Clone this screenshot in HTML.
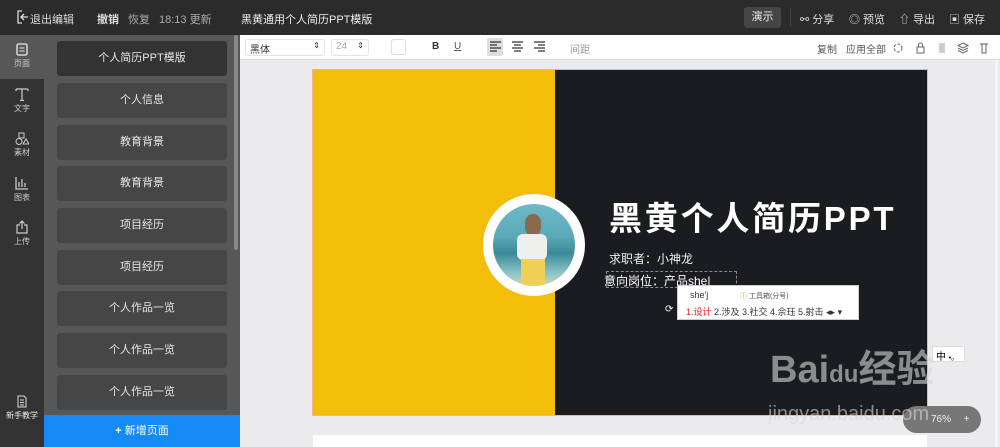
<!DOCTYPE html>
<html><head><meta charset="utf-8"><style>
*{margin:0;padding:0;box-sizing:border-box}
body{width:1000px;height:447px;overflow:hidden;background:#ebebed;font-family:"Liberation Sans","Noto Sans CJK SC",sans-serif;position:relative}
.a{position:absolute}
.top{left:0;top:0;width:1000px;height:35px;background:#2b2b2b;color:#ddd;font-size:11px}
.top span{position:absolute;top:11px}
.rail{left:0;top:35px;width:44px;height:412px;background:#333}
.ri{position:absolute;left:0;width:44px;text-align:center;color:#ccc;font-size:8px}
.ri svg{display:block;margin:0 auto 2px}
.side{left:44px;top:35px;width:196px;height:380px;background:#575757}
.card{position:absolute;left:13px;width:170px;height:35px;background:#464646;border-radius:3px;color:#e6e6e6;font-size:11px;text-align:center;line-height:35px}
.tb{left:240px;top:35px;width:760px;height:25px;background:#fff;border-bottom:1px solid #ddd;font-size:10px;color:#555}
.tb .a{top:6px}
</style></head><body>
<div class="a top">
<svg class="a" style="left:17px;top:10px" width="12" height="14" viewBox="0 0 12 14"><path d="M5 1H1v12h4M4 7h7M7 4l-3 3 3 3" stroke="#ddd" fill="none" stroke-width="1.3"/></svg>
<span style="left:30px">退出编辑</span>
<span style="left:97px;font-weight:bold">撤销</span>
<span style="left:128px;color:#aaa">恢复</span>
<span style="left:159px;color:#aaa">18:13 更新</span>
<span style="left:241px;color:#eee">黑黄通用个人简历PPT模版</span>
<div class="a" style="left:744px;top:7px;width:37px;height:21px;background:#454545;border-radius:3px;color:#eee;text-align:center;line-height:21px">演示</div>
<div class="a" style="left:790px;top:8px;width:1px;height:18px;background:#444"></div>
<span style="left:800px">⚯ 分享</span>
<span style="left:849px">◎ 预览</span>
<span style="left:899px">⇧ 导出</span>
<span style="left:949px">▣ 保存</span>
</div>
<div class="a rail">
<div class="a" style="left:0;top:0;width:44px;height:44px;background:#575757"></div>
<div class="ri" style="top:8px"><svg width="12" height="13"><rect x="1" y="1" width="10" height="11" rx="1.5" stroke="#eee" fill="none" stroke-width="1.3"/><path d="M3.5 5h5M3.5 8h5" stroke="#eee"/></svg>页面</div>
<div class="ri" style="top:52px"><svg width="14" height="14"><path d="M1 2h12M7 2v12M1 2v2M13 2v2M5 13.5h4" stroke="#ccc" fill="none" stroke-width="1.2"/></svg>文字</div>
<div class="ri" style="top:97px"><svg width="14" height="13"><rect x="4" y="1" width="5" height="5" stroke="#ccc" fill="none"/><circle cx="4" cy="9.5" r="3" stroke="#ccc" fill="none"/><path d="M8 12l3-5 3 5z" stroke="#ccc" fill="none"/></svg>素材</div>
<div class="ri" style="top:141px"><svg width="14" height="14"><path d="M1 1v12h12M4 11V6M7 11V3M10 11V7" stroke="#ccc" fill="none" stroke-width="1.3"/></svg>图表</div>
<div class="ri" style="top:185px"><svg width="12" height="14"><path d="M4 5H1v8h10V5H8M6 1v8M3.5 3.5L6 1l2.5 2.5" stroke="#ccc" fill="none" stroke-width="1.2"/></svg>上传</div>
<div class="ri" style="top:360px;color:#eee"><svg width="10" height="13"><path d="M1 1h6l2 2v9H1zM3 5h4M3 7.5h4M3 10h4" stroke="#ddd" fill="none"/></svg>新手教学</div>
</div>
<div class="a side">
<div class="card" style="top:6px;background:#333">个人简历PPT模版</div>
<div class="card" style="top:48px">个人信息</div>
<div class="card" style="top:90px">教育背景</div>
<div class="card" style="top:131px">教育背景</div>
<div class="card" style="top:173px">项目经历</div>
<div class="card" style="top:215px">项目经历</div>
<div class="card" style="top:256px">个人作品一览</div>
<div class="card" style="top:298px">个人作品一览</div>
<div class="card" style="top:340px">个人作品一览</div>
<div class="a" style="left:190px;top:0;width:4px;height:215px;background:#888;border-radius:2px"></div>
</div>
<div class="a" style="left:44px;top:415px;width:196px;height:32px;background:#1589f5;color:#fff;font-size:11px;text-align:center;line-height:32px"><b>+</b> 新增页面</div>
<div class="a tb">
<div class="a" style="left:5px;top:4px;width:80px;height:17px;border:1px solid #e3e3e3;border-radius:3px;padding:1px 4px;color:#333">黑体<span style="float:right;font-size:8px">⇕</span></div>
<div class="a" style="left:91px;top:4px;width:38px;height:17px;border:1px solid #e3e3e3;border-radius:3px;padding:1px 4px;color:#aaa">24<span style="float:right;font-size:8px;color:#333">⇕</span></div>
<div class="a" style="left:151px;top:4px;width:15px;height:16px;border:1px solid #ddd;border-radius:3px"></div>
<div class="a" style="left:192px;font-weight:bold;color:#333">B</div>
<div class="a" style="left:214px;text-decoration:underline;color:#555">U</div>
<div class="a" style="left:247px;top:3px;width:16px;height:18px;background:#ddd;border-radius:2px"></div>
<svg class="a" style="left:249px;top:6px" width="80" height="12"><path d="M1 1h11M1 4h7M1 7h11M1 10h7M23 1h11M25 4h7M23 7h11M25 10h7M45 1h11M49 4h7M45 7h11M49 10h7" stroke="#333" stroke-width="1.2"/></svg>
<div class="a" style="left:330px;color:#999">间距</div>
<div class="a" style="left:577px">复制</div>
<div class="a" style="left:606px">应用全部</div>
<svg class="a" style="left:653px;top:7px" width="100" height="12"><circle cx="5" cy="6" r="4" stroke="#666" fill="none" stroke-dasharray="3 1.5"/><rect x="24" y="5" width="7" height="6" stroke="#666" fill="none"/><path d="M25.5 5V3a2 2 0 0 1 4 0v2" stroke="#666" fill="none"/><rect x="46" y="1" width="6" height="10" fill="#ccc"/><path d="M70 1l5 2.5-5 2.5-5-2.5zM65 6l5 2.5 5-2.5M65 8.5l5 2.5 5-2.5" stroke="#666" fill="none"/><path d="M87 2h8M89 2v9h4V2" stroke="#666" fill="none"/></svg>
</div>
<div class="a" style="left:995px;top:60px;width:3px;height:387px;background:#f4f4f4"></div>
<div class="a" style="left:312px;top:69px;width:616px;height:347px;border:1px solid #f2b38f"></div>
<div class="a" style="left:313px;top:70px;width:242px;height:345px;background:#f2be0a"></div>
<div class="a" style="left:555px;top:70px;width:372px;height:345px;background:#1b1c20"></div>
<div class="a" style="left:313px;top:435px;width:614px;height:12px;background:#fff"></div>
<div class="a" style="left:483px;top:194px;width:102px;height:102px;border-radius:50%;background:#fff"></div>
<div class="a" style="left:493px;top:204px;width:82px;height:82px;border-radius:50%;background:linear-gradient(#6fb9c7 0%,#5ba9b8 40%,#3a8a98 60%,#8fc5c9 85%,#cfd6b8 100%);overflow:hidden">
<div class="a" style="left:32px;top:10px;width:16px;height:22px;background:#8a6a4e;border-radius:8px"></div>
<div class="a" style="left:24px;top:30px;width:30px;height:26px;background:#eef0ee;border-radius:6px"></div>
<div class="a" style="left:28px;top:55px;width:24px;height:30px;background:#f0cf55"></div>
</div>
<div class="a" style="left:609px;top:198px;color:#fff;font-size:33px;font-weight:bold;letter-spacing:2.8px;line-height:42px">黑黄个人简历PPT</div>
<div class="a" style="left:609px;top:250px;color:#eee;font-size:12px">求职者：小神龙</div>
<div class="a" style="left:606px;top:271px;width:131px;height:17px;border:1px dashed #888"></div>
<div class="a" style="left:604px;top:272px;color:#fff;font-size:12px">意向岗位：产品she|</div>
<div class="a" style="left:665px;top:304px;color:#fff;font-size:10px">⟳</div>
<div class="a" style="left:677px;top:285px;width:182px;height:35px;background:#fff;border:1px solid #ccc;font-size:9px">
<div class="a" style="left:12px;top:4px;color:#333">she'j</div>
<div class="a" style="left:62px;top:5px;color:#555;font-size:7px"><span style="color:#e08a00">ⓘ</span> 工具箱(分号)</div>
<div class="a" style="left:8px;top:19px;color:#333;white-space:nowrap"><span style="color:#d22">1.设计</span> 2.涉及 3.社交 4.佘珏 5.射击 ◂▸ ▾</div>
</div>
<div class="a" style="left:932px;top:346px;width:33px;height:16px;background:#fff;border:1px solid #ddd;font-size:10px;padding:1px 3px">中 <span style="font-size:7px">•ₒ</span></div>
<div class="a" style="left:903px;top:406px;width:78px;height:27px;background:#777;border-radius:14px;color:#eee;font-size:10px;line-height:27px;padding-left:28px">76% <span style="margin-left:10px">+</span></div>
<div class="a" style="left:770px;top:338px;color:rgba(215,215,215,.6);font-size:38px;font-weight:bold">Bai<span style="font-size:24px">du</span>经验</div>
<div class="a" style="left:768px;top:403px;color:rgba(215,215,215,.6);font-size:20px">jingyan.baidu.com</div>
</body></html>
